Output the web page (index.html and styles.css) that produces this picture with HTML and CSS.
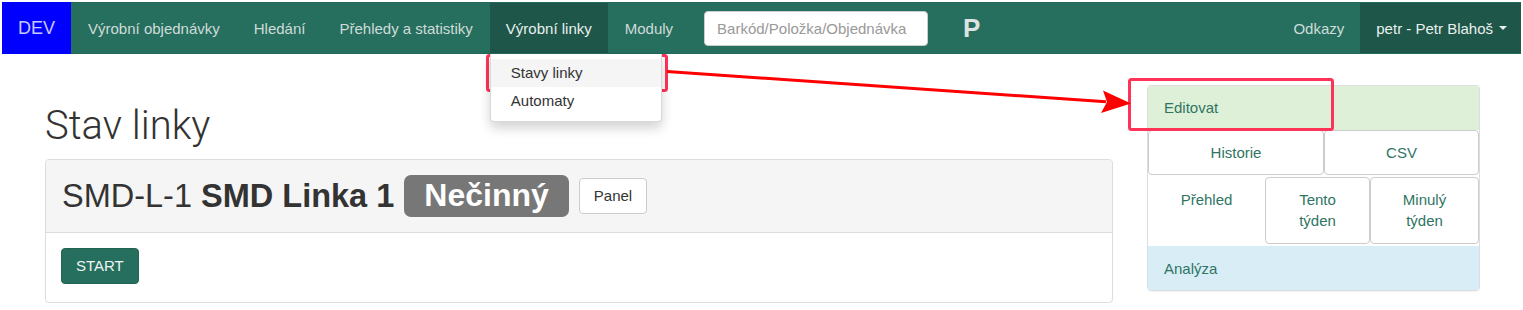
FILE: index.html
```html
<!DOCTYPE html>
<html lang="cs">
<head>
    <meta charset="UTF-8">
    <meta name="viewport" content="width=device-width, initial-scale=1.0">
    <title>Stav linky</title>
    <link rel="stylesheet" href="styles.css">
</head>
<body>
    <nav class="navbar">
        <a class="brand" href="#">DEV</a>
        <ul class="nav">
            <li><a href="#">Výrobní objednávky</a></li>
            <li><a href="#">Hledání</a></li>
            <li><a href="#">Přehledy a statistiky</a></li>
            <li class="dropdown open">
                <a href="#">Výrobní linky</a>
                <ul class="dropdown-menu">
                    <li class="hover"><a href="#">Stavy linky</a></li>
                    <li><a href="#">Automaty</a></li>
                </ul>
            </li>
            <li><a href="#">Moduly</a></li>
        </ul>
        <form class="search">
            <input type="text" placeholder="Barkód/Položka/Objednávka">
        </form>
        <span class="logo-p">P</span>
        <ul class="nav nav-right">
            <li><a href="#">Odkazy</a></li>
            <li class="user"><a href="#">petr - Petr Blahoš <span class="caret"></span></a></li>
        </ul>
    </nav>

    <div class="page">
        <div class="main">
            <h1>Stav linky</h1>
            <div class="panel">
                <div class="panel-heading">
                    <span class="line-title">SMD-L-1 <b>SMD Linka 1</b></span>
                    <span class="label">Nečinný</span>
                    <a class="btn" href="#">Panel</a>
                </div>
                <div class="panel-body">
                    <a class="btn btn-primary" href="#">START</a>
                </div>
            </div>
        </div>

        <aside class="side">
            <div class="list-group">
                <a class="list-item success" href="#">Editovat</a>
                <div class="btn-row two">
                    <a class="cell boxed" href="#">Historie</a>
                    <a class="cell boxed" href="#">CSV</a>
                </div>
                <div class="btn-row three">
                    <span class="cell">Přehled</span>
                    <a class="cell boxed" href="#">Tento<br>týden</a>
                    <a class="cell boxed" href="#">Minulý<br>týden</a>
                </div>
                <a class="list-item info" href="#">Analýza</a>
            </div>
        </aside>
    </div>

    <!-- annotation overlay -->
    <svg class="marks" width="1523" height="310" viewBox="0 0 1523 310">
        <rect x="487.5" y="55.5" width="179" height="35" rx="2" fill="none" stroke="#ff3358" stroke-width="3"/>
        <rect x="1129.5" y="79.5" width="203" height="50" rx="2" fill="none" stroke="#ff3358" stroke-width="3"/>
        <line x1="667" y1="71.5" x2="1106" y2="101.8" stroke="#ff0000" stroke-width="3"/>
        <polygon points="1131,103.5 1101,113 1107,102 1103,90.5" fill="#ff0000"/>
    </svg>
</body>
</html>
```

FILE: styles.css
```css
body {
    position: relative;
    margin: 0;
    padding: 2px 2px 0 2px;
    font-family: "Liberation Sans", Arial, sans-serif;
    font-size: 15px;
    line-height: 21px;
    color: #333;
    background: #fff;
}

a {
    text-decoration: none;
}

ul {
    list-style: none;
    margin: 0;
    padding: 0;
}

/* top bar */
.navbar {
    display: flex;
    align-items: stretch;
    height: 50px;
    background-color: #266e5e;
    border-top: 1px solid #22695a;
    border-bottom: 1px solid #22695a;
}

.brand {
    display: flex;
    align-items: center;
    margin-top: -1px;
    margin-bottom: -1px;
    padding: 0 16px;
    background-color: #0000ff;
    color: #c8c8ff;
    font-size: 18px;
}

.nav {
    display: flex;
}

.nav > li {
    position: relative;
    display: flex;
}

.nav > li > a {
    display: flex;
    align-items: center;
    padding: 0 17px;
    color: #cfdcd8;
}

.nav > li.open > a {
    padding: 0 16px;
}

.nav > li.open > a,
.nav > li.user > a {
    background-color: #1e5649;
    color: #e9f0ee;
}

.search {
    display: flex;
    align-items: center;
    margin: 0 0 0 14px;
}

.search input {
    width: 224px;
    height: 35px;
    box-sizing: border-box;
    padding: 6px 12px;
    border: 1px solid #ccc;
    border-radius: 4px;
    font-family: inherit;
    font-size: 15px;
}

.search input::placeholder {
    color: #999;
}

.logo-p {
    display: flex;
    align-items: center;
    margin-left: 35px;
    color: #dde3e1;
    font-size: 26px;
    font-weight: bold;
}

.nav-right {
    margin-left: auto;
}

.nav-right > li > a {
    padding: 0 16px;
}

.nav-right > li.user > a {
    padding: 0 14px 0 16px;
}

.caret {
    display: inline-block;
    width: 0;
    height: 0;
    margin-left: 6px;
    vertical-align: middle;
    border-top: 4px solid #e9f0ee;
    border-left: 4px solid transparent;
    border-right: 4px solid transparent;
}

.dropdown-menu {
    position: absolute;
    top: 51px;
    left: 0;
    width: 172px;
    box-sizing: border-box;
    padding: 5px 0 6px;
    background: #fff;
    border: 1px solid rgba(0, 0, 0, 0.15);
    border-top: 0;
    border-radius: 0 0 4px 4px;
    box-shadow: 0 6px 12px rgba(0, 0, 0, 0.175);
    z-index: 10;
}

.dropdown-menu a {
    display: block;
    padding: 4px 20px;
    line-height: 20px;
    color: #333;
}

.dropdown-menu .hover a {
    background-color: #f5f5f5;
}

/* content */
.page {
    display: flex;
    gap: 34px;
    padding: 31px 41px 0 43px;
}

.main {
    flex: 1;
}

h1 {
    margin: 20px 0 12px;
    font-family: Roboto, "Liberation Sans", sans-serif;
    font-weight: 300;
    font-size: 40px;
    line-height: 42px;
}

.panel {
    border: 1px solid #ddd;
    border-radius: 4px;
    box-shadow: 0 1px 1px rgba(0, 0, 0, 0.05);
}

.panel-heading {
    display: flex;
    align-items: center;
    gap: 10px;
    padding: 15px 16px;
    background-color: #f5f5f5;
    border-bottom: 1px solid #ddd;
    border-radius: 3px 3px 0 0;
}

.line-title {
    font-size: 32.5px;
    line-height: 42px;
}

.label {
    padding: 4px 20px 6px;
    background-color: #777;
    color: #fff;
    border-radius: 7px;
    font-size: 32px;
    font-weight: bold;
    line-height: 32px;
}

.btn {
    display: inline-block;
    padding: 7px 14px;
    border: 1px solid #ccc;
    border-radius: 4px;
    background: #fff;
    color: #333;
    font-size: 15px;
    line-height: 20px;
}

.panel-body {
    padding: 15px 15px 18px;
}

.btn-primary {
    background-color: #266e5e;
    border-color: #22644f;
    color: #eef4f2;
}

/* right column */
.side {
    width: 333px;
}

.list-group {
    border: 1px solid #ddd;
    border-radius: 4px;
    overflow: hidden;
    box-shadow: 0 1px 1px rgba(0, 0, 0, 0.05);
}

.list-item {
    display: block;
    padding: 11px 16px 12px;
    color: #2f7563;
}

.list-item.success {
    background-color: #dff0d8;
}

.list-item.info {
    background-color: #d9edf7;
    margin-top: 2px;
    padding: 12px 16px 11px;
}

.btn-row {
    display: grid;
}

.btn-row.two {
    grid-template-columns: 176px 1fr;
}

.btn-row.three {
    grid-template-columns: 117px 105px 1fr;
    margin-top: 2px;
}

.cell {
    padding: 11px 8px;
    text-align: center;
    color: #2f7563;
    border: 1px solid transparent;
}

.btn-row.three .cell {
    padding: 11px 8px 12px;
}

.cell.boxed {
    border-color: #ccc;
    border-radius: 4px;
}

.marks {
    position: absolute;
    top: 0;
    left: 0;
    pointer-events: none;
}
```
